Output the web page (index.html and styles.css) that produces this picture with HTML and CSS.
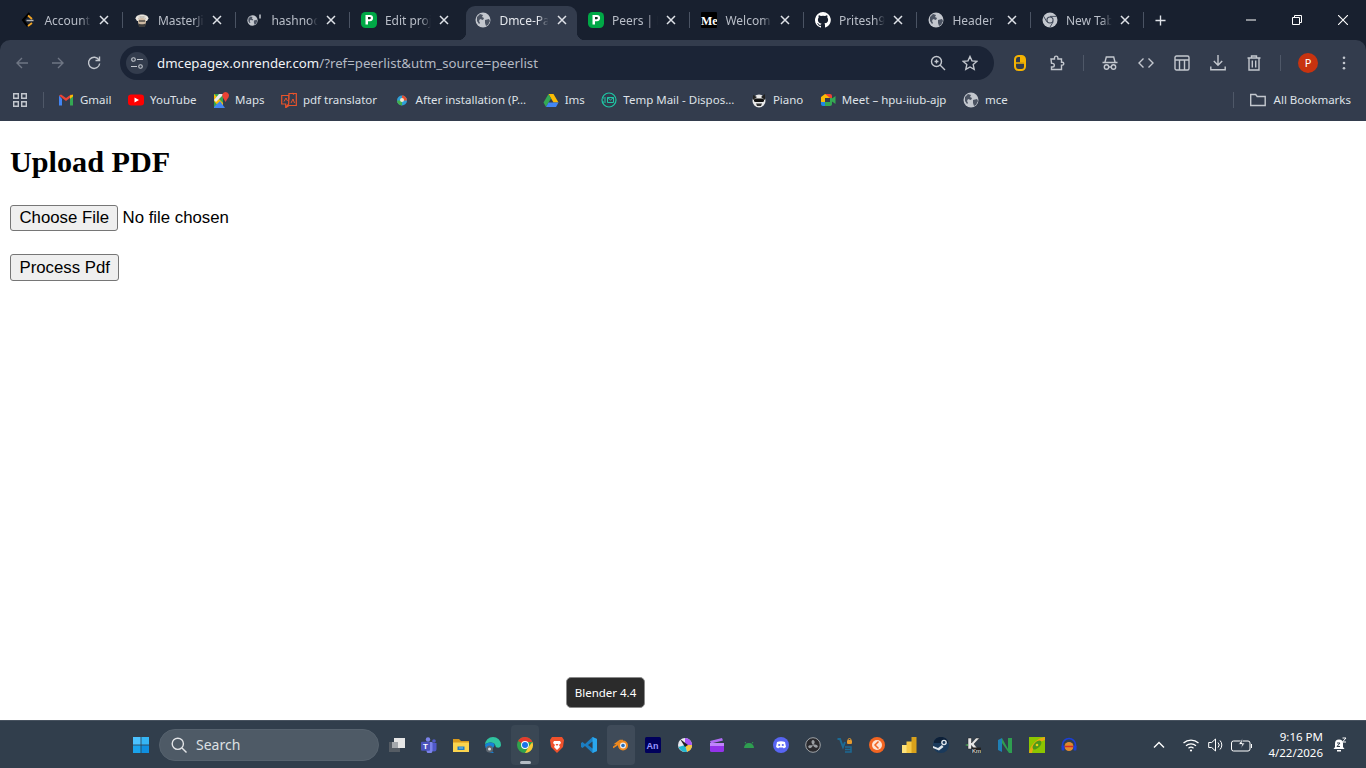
FILE: index.html
```html
<!DOCTYPE html>
<html>
<head>
    <meta charset="utf-8">
    <title>Dmce-Pagex</title>
    <link rel="stylesheet" href="styles.css">
</head>
<body>
<svg class="defs" width="0" height="0">
    <symbol id="globe" viewBox="0 0 16 16">
        <circle cx="8" cy="8" r="7.500" fill="#c3c7ce"/>
        <path d="M2 5l3-3 3 1-1 2 2 1-1 2-3-1-1 2 1 2-1 1-2-3zM10 8l4-1 1 2-2 4-2 1-1-3z" fill="#4b5362"/>
    </symbol>
    <symbol id="peerlist" viewBox="0 0 16 16">
        <rect width="16" height="16" rx="4.500" fill="#00a846"/>
        <path d="M4.500 3h4.500a3.100 3.100 0 0 1 0 6.200H7v3.300H4.500z" fill="#fff"/>
        <path d="M7 5v2.200h1.800a1.100 1.100 0 0 0 0-2.200z" fill="#14301f"/>
    </symbol>
    <symbol id="close" viewBox="0 0 10 10">
        <path d="M1 1l8 8M9 1L1 9" stroke="#dfe2e8" stroke-width="1.500"/>
    </symbol>
</svg>

<header class="chrome">
    <div class="tabstrip">
        <div class="tab">
            <svg class="favicon" viewBox="0 0 16 16"><path d="M9.500 1L3 8l4.500 6" fill="none" stroke="#000" stroke-width="2.200"/><path d="M8 3.500l4 3.500M8 14l4-3" stroke="#f5a623" stroke-width="1.800"/><path d="M6.500 8.500h7" stroke="#b5b5b5" stroke-width="1.500"/></svg>
            <span class="tab-label">Account</span>
            <svg class="tab-close"><use href="#close"/></svg>
        </div>
        <div class="tab">
            <svg class="favicon" viewBox="0 0 16 16"><path d="M1.500 6.500C2 1 14 1 14.500 6.500L13 9H3z" fill="#e9e6df"/><path d="M4 3.500l8 3M12 3.500l-8 3" stroke="#b7b3aa" stroke-width=".8"/><circle cx="8" cy="10" r="4" fill="#cdb9a3"/><path d="M4 11.500c2 1 6 1 8 0l-1 3.500H5z" fill="#3d3d3d"/><path d="M5 9h6" stroke="#333" stroke-width="1.200"/></svg>
            <span class="tab-label">MasterJi</span>
            <svg class="tab-close"><use href="#close"/></svg>
        </div>
        <div class="tab">
            <svg class="favicon" viewBox="0 0 16 16"><use href="#globe" width="11" height="11" y="3"/><path d="M13 2.500v4" stroke="#c3c7ce" stroke-width="1.500"/></svg>
            <span class="tab-label">hashnod</span>
            <svg class="tab-close"><use href="#close"/></svg>
        </div>
        <div class="tab tab-noline">
            <svg class="favicon"><use href="#peerlist"/></svg>
            <span class="tab-label">Edit proj</span>
            <svg class="tab-close"><use href="#close"/></svg>
        </div>
        <div class="tab tab-active">
            <svg class="favicon"><use href="#globe"/></svg>
            <span class="tab-label">Dmce-Pa</span>
            <svg class="tab-close"><use href="#close"/></svg>
        </div>
        <div class="tab">
            <svg class="favicon"><use href="#peerlist"/></svg>
            <span class="tab-label">Peers | D</span>
            <svg class="tab-close"><use href="#close"/></svg>
        </div>
        <div class="tab">
            <svg class="favicon" viewBox="0 0 16 16"><rect width="16" height="16" rx="1" fill="#000"/><text x="0" y="12.500" class="medium-mark">Me</text></svg>
            <span class="tab-label">Welcom</span>
            <svg class="tab-close"><use href="#close"/></svg>
        </div>
        <div class="tab">
            <svg class="favicon" viewBox="0 0 16 16"><path d="M8 0a8 8 0 0 0-2.500 15.600c.4.100.5-.2.500-.4v-1.400c-2.200.5-2.700-1-2.700-1-.4-.9-.9-1.200-.9-1.200-.7-.5.100-.5.100-.5.800.1 1.200.8 1.200.8.700 1.200 1.900.9 2.300.7.100-.5.300-.9.500-1.100-1.800-.2-3.600-.9-3.600-4 0-.9.300-1.600.8-2.100-.1-.2-.4-1 .1-2.100 0 0 .7-.2 2.200.8a7.600 7.600 0 0 1 4 0c1.500-1 2.200-.8 2.200-.8.400 1.100.2 1.900.1 2.100.5.600.8 1.300.8 2.100 0 3.100-1.900 3.700-3.700 3.900.3.300.6.800.6 1.500v2.200c0 .2.100.5.600.4A8 8 0 0 0 8 0z" fill="#fff"/></svg>
            <span class="tab-label">Pritesh9</span>
            <svg class="tab-close"><use href="#close"/></svg>
        </div>
        <div class="tab">
            <svg class="favicon"><use href="#globe"/></svg>
            <span class="tab-label">Header</span>
            <svg class="tab-close"><use href="#close"/></svg>
        </div>
        <div class="tab">
            <svg class="favicon" viewBox="0 0 16 16"><circle cx="8" cy="8" r="7.500" fill="#c3c7ce"/><circle cx="8" cy="8" r="3.600" fill="#3a4354"/><circle cx="8" cy="8" r="2.500" fill="#c3c7ce"/><path d="M8 4.400h6.500M4.800 9.800L1.600 4.200M11.200 9.800L7.800 15.400" stroke="#3a4354" stroke-width=".9"/></svg>
            <span class="tab-label">New Tab</span>
            <svg class="tab-close"><use href="#close"/></svg>
        </div>
        <svg class="newtab" viewBox="0 0 12 12"><path d="M6 .5v11M.5 6h11" stroke="#dfe2e8" stroke-width="1.500"/></svg>
        <div class="winctl">
            <div class="winbtn"><svg viewBox="0 0 10 10"><path d="M0 5h10" stroke="#fff"/></svg></div>
            <div class="winbtn"><svg viewBox="0 0 10 10"><path d="M.5 2.500h7v7h-7zM2.500 2.500v-2h7v7h-2" fill="none" stroke="#fff"/></svg></div>
            <div class="winbtn"><svg viewBox="0 0 10 10"><path d="M0 0l10 10M10 0L0 10" stroke="#fff" stroke-width="1.100"/></svg></div>
        </div>
    </div>

    <div class="toolbar">
        <div class="tool"><svg viewBox="0 0 16 16"><path d="M14 8H3M8 3L3 8l5 5" class="dim"/></svg></div>
        <div class="tool"><svg viewBox="0 0 16 16"><path d="M2 8h11M8 3l5 5-5 5" class="dim"/></svg></div>
        <div class="tool"><svg viewBox="0 0 16 16"><path d="M13 5a5.600 5.600 0 1 0 .7 3.500M13.500 1.500V5.500H9.500" class="line"/></svg></div>
        <div class="urlbar">
            <div class="url-tune"><svg viewBox="0 0 14 14"><circle cx="3.500" cy="3.500" r="1.800" class="thin"/><path d="M7 3.500h6M1 10.500h6" class="thin"/><circle cx="10.500" cy="10.500" r="1.800" class="thin"/></svg></div>
            <div class="url-text"><span class="url-host">dmcepagex.onrender.com</span><span class="url-rest">/?ref=peerlist&amp;utm_source=peerlist</span></div>
            <svg class="url-icon" viewBox="0 0 16 16"><circle cx="6.500" cy="6.500" r="5" class="line"/><path d="M10 10l5 5M4.500 6.500h4M6.500 4.500v4" class="line"/></svg>
            <svg class="url-icon" viewBox="0 0 16 16"><path d="M8 1.500l2 4.400 4.800.5-3.600 3.200 1 4.700L8 12l-4.200 2.300 1-4.700L1.200 6.400 6 5.900z" class="line"/></svg>
        </div>
        <div class="tool tool-ext"><svg viewBox="0 0 16 16"><rect x="3" y="1" width="10" height="14" rx="3.500" fill="none" stroke="#f5b301" stroke-width="2"/><path d="M8 1h2a3 3 0 0 1 3 3v3.500H8z" fill="#f5b301"/><path d="M3 8h10" stroke="#f5b301" stroke-width="1.500"/></svg></div>
        <div class="tool"><svg viewBox="0 0 16 16"><path d="M2 4h3.500V2.800a1.700 1.700 0 0 1 3.400 0V4h3.600v3.300h.9a1.400 1.400 0 0 1 0 2.800h-.9V14.500H2.500V12h1a1.800 1.800 0 0 0 0-3.600h-1z" class="line"/></svg></div>
        <div class="sep"></div>
        <div class="tool"><svg viewBox="0 0 16 16"><path d="M.5 7.500h15M3 7l1.300-5h7.400L13 7" class="line"/><circle cx="4.500" cy="12" r="2.200" class="line"/><circle cx="11.500" cy="12" r="2.200" class="line"/><path d="M6.700 12h2.600" class="line"/></svg></div>
        <div class="tool"><svg viewBox="0 0 16 16"><path d="M5.500 3.500L1 8l4.500 4.500M10.500 3.500L15 8l-4.500 4.500" class="line"/></svg></div>
        <div class="tool"><svg viewBox="0 0 16 16"><rect x="1" y="1" width="14" height="14" rx="1.500" class="line"/><path d="M1 5h14M5.500 5v10M10.500 5v10" class="line"/></svg></div>
        <div class="tool"><svg viewBox="0 0 16 16"><path d="M8 0v10M3.800 6L8 10.200 12.200 6M.8 11.500v3.300h14.400v-3.300" class="line"/></svg></div>
        <div class="tool"><svg viewBox="0 0 16 16"><path d="M1.500 3h13M5.500 3V1h5v2M3 3v12h10V3M6.300 5.500v7M9.700 5.500v7" class="line"/></svg></div>
        <div class="sep sep-wide"></div>
        <div class="tool"><div class="avatar">P</div></div>
        <div class="tool"><svg viewBox="0 0 16 16"><circle cx="8" cy="2.800" r="1.300" fill="#c3c7ce"/><circle cx="8" cy="8" r="1.300" fill="#c3c7ce"/><circle cx="8" cy="13.200" r="1.300" fill="#c3c7ce"/></svg></div>
    </div>

    <nav class="bookmarks">
        <svg class="apps" viewBox="0 0 14 14"><path d="M.7.7h4.600v4.600H.7zM8.700.7h4.600v4.600H8.700zM.7 8.700h4.600v4.600H.7zM8.700 8.700h4.600v4.600H8.700z" class="line"/></svg>
        <div class="sep sep-bm"></div>
        <a class="bm"><svg viewBox="0 0 16 16"><path d="M1 3.500v10h3V7z" fill="#4285f4"/><path d="M12 7v6.500h3v-10z" fill="#34a853"/><path d="M1 3.500L8 9l7-5.500-2-1L8 6 3 2.500z" fill="#ea4335"/><path d="M12 3.500l3-1v2l-3 2.500z" fill="#fbbc04"/></svg>Gmail</a>
        <a class="bm"><svg viewBox="0 0 16 16"><rect y="2.500" width="16" height="11" rx="3" fill="#f00"/><path d="M6.500 5.500v5L11 8z" fill="#fff"/></svg>YouTube</a>
        <a class="bm"><svg viewBox="0 0 16 16"><path d="M1 2h9v14H1z" fill="#34a853"/><path d="M1 2l9 9v5H7L1 9z" fill="#fbbc04"/><path d="M1 15l6-6 5 7H1z" fill="#4285f4"/><path d="M6 2h5l-8 8-2-2z" fill="#e8eaed"/><path d="M12.500 0a3.500 3.500 0 0 1 3 5.200L12.500 10 9.700 5.200A3.500 3.500 0 0 1 12.500 0z" fill="#ea4335"/></svg>Maps</a>
        <a class="bm"><svg viewBox="0 0 16 16"><path d="M.7 3.500h7v8.500l-3 3.300v-3.300H.7zM8 7.500V1.500h7.300V13.500H8l-3 2M11.500 1l1.500 1.500" fill="none" stroke="#e8532b" stroke-width="1.200"/><path d="M3 9.500l2-3.500 1.500 3M10 11l2-4 1.500 4" fill="none" stroke="#e8532b"/></svg>pdf translator</a>
        <a class="bm"><svg viewBox="0 0 16 16"><circle cx="8" cy="8.500" r="5" fill="#2f9fd6"/><path d="M8 3.500a5 5 0 0 1 5 5H8z" fill="#e8502f"/><path d="M3 8.500a5 5 0 0 0 5 5v-5z" fill="#45b04a"/><circle cx="8" cy="8" r="2" fill="#f1e9d2"/></svg>After installation (P...</a>
        <a class="bm"><svg viewBox="0 0 16 16"><path d="M5.500 2h5l5 8.500h-5z" fill="#fbbc04"/><path d="M5.500 2l-5 8.500L3 15l5-8.500z" fill="#34a853"/><path d="M3 15h10l2.500-4.500h-10z" fill="#4285f4"/></svg>Ims</a>
        <a class="bm"><svg viewBox="0 0 16 16"><circle cx="8" cy="8" r="7" fill="none" stroke="#1ec8a5" stroke-width="1.200"/><path d="M2 6h3M3 8h2M2 10h3" stroke="#1ec8a5"/><path d="M6.500 5.500h6v5h-6zM6.500 5.500l3 2.500 3-2.500" fill="none" stroke="#1ec8a5"/></svg>Temp Mail - Dispos...</a>
        <a class="bm"><svg viewBox="0 0 16 16"><circle cx="8" cy="9" r="6.500" fill="#e9e9e9"/><path d="M2 3l4 2-4 3zM14 2l-4 3 4 3z" fill="#222"/><rect x="3" y="6.500" width="10" height="3.500" rx="1.500" fill="#111"/><path d="M5 11.500h6l-1 2.500H6z" fill="#333"/></svg>Piano</a>
        <a class="bm"><svg viewBox="0 0 16 16"><path d="M1 5l4-3h5v4H5v4H1z" fill="#fbbc04"/><path d="M1 10h4v4H3a2 2 0 0 1-2-2z" fill="#1e88e5"/><path d="M5 10h5v4H5z" fill="#34a853"/><path d="M5 2h5a2 2 0 0 1 2 2v2h-2z" fill="#ea4335"/><path d="M10 6h2v6a2 2 0 0 1-2 2z" fill="#34a853"/><path d="M12 6.500l3.500-2.500v8L12 9.500z" fill="#34a853"/></svg>Meet &ndash; hpu-iiub-ajp</a>
        <a class="bm"><svg><use href="#globe"/></svg>mce</a>
        <div class="bm-right">
            <div class="sep sep-bm sep-all"></div>
            <a class="bm bm-all"><svg viewBox="0 0 16 16"><path d="M.7 13.500V2.500h5l1.500 2h8v9z" class="line"/></svg>All Bookmarks</a>
        </div>
    </nav>
</header>

<main class="page">
    <h1>Upload PDF</h1>
    <form class="upload-form">
        <p><input type="file"></p>
        <p><button type="button">Process Pdf</button></p>
    </form>
</main>

<div class="tooltip">Blender 4.4</div>

<footer class="taskbar">
    <svg class="start" viewBox="0 0 16 16"><path d="M0 0h7.600v7.600H0z" fill="#4cc2ff"/><path d="M8.400 0H16v7.600H8.400z" fill="#35b5f5"/><path d="M0 8.400h7.600V16H0z" fill="#1aa3ec"/><path d="M8.400 8.400H16V16H8.400z" fill="#0f8fe0"/></svg>
    <div class="search">
        <svg viewBox="0 0 16 16"><circle cx="6.800" cy="6.800" r="5.600" fill="none" stroke="#e3e5e8" stroke-width="1.400"/><path d="M11 11l4.500 4.500" stroke="#e3e5e8" stroke-width="1.400"/></svg>
        <span>Search</span>
    </div>
    <div class="tray-apps">
        <div class="app"><svg viewBox="0 0 16 16"><rect x="0" y="5" width="11" height="10" fill="#555c64"/><rect x="5" y="1" width="11" height="10" fill="#e6e6e6"/><rect x="3" y="5" width="6" height="6" fill="#a5a9ad"/></svg></div>
        <div class="app"><svg viewBox="0 0 16 16"><circle cx="7" cy="2.500" r="2.200" fill="#7b83eb"/><circle cx="13" cy="4" r="1.800" fill="#5059c9"/><path d="M10 6h5.500v6a2.500 2.500 0 0 1-5 0z" fill="#5059c9"/><path d="M4 5h7.500v8a3 3 0 0 1-6 1z" fill="#7b83eb"/><rect x="0" y="4.800" width="9" height="9" rx="1" fill="#4b53bc"/><text x="2.100" y="12" class="teams-mark">T</text></svg></div>
        <div class="app"><svg viewBox="0 0 16 16"><path d="M0 2h6l2 2h8v3H0z" fill="#d99a1c"/><path d="M0 5.500h16V15H0z" fill="#fbd44e"/><rect x="4.500" y="9.500" width="7" height="3.500" fill="#1f7dc7"/><rect x="6" y="10.500" width="4" height="1" fill="#7fc4ee"/></svg></div>
        <div class="app"><svg viewBox="0 0 16 16"><path d="M0 8a8 8 0 0 1 16 0c0 2-2 3-4 2.500C10 10 11 8 9 6.500 6 4.500 1 6 0 8z" fill="#2fc4a0"/><path d="M0 8c1-2 6-3.500 9-1.500 1 1 .5 3-1 4.500-1.500 2-1 4 1 4.900A8 8 0 0 1 0 8z" fill="#1582d8"/><circle cx="4.500" cy="12" r="3.500" fill="#5d6670"/><circle cx="4.500" cy="12" r="1.500" fill="#ddd"/></svg></div>
        <div class="app app-open">
            <svg viewBox="0 0 16 16"><circle cx="8" cy="8" r="8" fill="#31a24c"/><path d="M8 8L1.100 4A8 8 0 0 1 15.400 5H8z" fill="#e33b2e"/><path d="M15.400 5A8 8 0 0 1 8 16l3.500-6z" fill="#fcc934"/><circle cx="8" cy="8" r="3.900" fill="#fff"/><circle cx="8" cy="8" r="3" fill="#1a73e8"/></svg>
            <div class="app-dot"></div>
        </div>
        <div class="app"><svg viewBox="0 0 16 16"><path d="M3 0h10l2 3-1 7-6 6-6-6-1-7z" fill="#f0512b"/><path d="M5 4h6l1 2-2 2 1 2-3 3-3-3 1-2-2-2z" fill="#fff"/><path d="M6.500 7h3L8 9z" fill="#f0512b"/></svg></div>
        <div class="app"><svg viewBox="0 0 16 16"><path d="M11.500 0L16 2v12l-4.500 2L4 9l-2.500 2L0 10V6l1.500-1L4 7z" fill="#1b7ec2"/><path d="M11.500 0L16 2v12l-4.500 2z" fill="#2aa6ec"/><path d="M11.500 4.500L7 8l4.500 3.500z" fill="#333e4c"/></svg></div>
        <div class="app app-hover"><svg viewBox="0 0 16 16"><path d="M0 10.500L6 6.500H3L7 3.500h3" fill="none" stroke="#f08a1e" stroke-width="1.600"/><circle cx="10" cy="8.500" r="5" fill="#f08a1e"/><circle cx="10" cy="8.500" r="3" fill="#e8eef4"/><circle cx="10" cy="8.500" r="1.800" fill="#2a6fb8"/></svg></div>
        <div class="app"><svg viewBox="0 0 16 16"><rect width="16" height="16" rx="1.500" fill="#00005b"/><text x="1.500" y="11.500" class="an-mark">An</text></svg></div>
        <div class="app"><svg viewBox="0 0 16 16"><circle cx="8" cy="8" r="7" fill="#e8e8f0"/><path d="M8 1a7 7 0 0 1 7 7L8 8z" fill="#a855f7"/><path d="M15 8a7 7 0 0 1-5 6.700L8 8z" fill="#f5c542"/><path d="M10 14.700A7 7 0 0 1 1.500 10L8 8z" fill="#22b8cf"/><path d="M3 2l8 6-3 2z" fill="#222"/></svg></div>
        <div class="app"><svg viewBox="0 0 16 16"><path d="M1 4l12-3 1 2.500L2 6.500z" fill="#b06cf5"/><rect x="1" y="6" width="14" height="9" rx="1.500" fill="#9333ea"/><rect x="1" y="6" width="14" height="3" fill="#c084fc"/></svg></div>
        <div class="app"><svg viewBox="0 0 16 16"><path d="M3 11a5 5 0 0 1 10 0z" fill="#2e9e50"/><path d="M5 6.500L4 5M11 6.500L12 5" stroke="#2e9e50"/></svg></div>
        <div class="app"><svg viewBox="0 0 16 16"><circle cx="8" cy="8" r="8" fill="#5865f2"/><path d="M4 5c2.500-1 5.500-1 8 0l1 5c-1 1-2 1.300-2.500 1.300L10 10.500H6l-.5.800C5 11.300 4 11 3 10z" fill="#fff"/><circle cx="6.200" cy="8" r="1.100" fill="#5865f2"/><circle cx="9.800" cy="8" r="1.100" fill="#5865f2"/></svg></div>
        <div class="app"><svg viewBox="0 0 16 16"><circle cx="8" cy="8" r="7.300" fill="#2a2a2e" stroke="#a0a4a8"/><path d="M8 8C6 6 6 3.500 8 3c2 .5 2.500 3 0 5zM8 8c-2.800.5-4.500-.5-4.800 2 .8 2 3.500 1.500 4.800-2zM8 8c1 2.500 3.500 3.500 4.800 2 .3-2-2.300-3-4.800-2z" fill="#9a9ea3"/></svg></div>
        <div class="app"><svg viewBox="0 0 16 16"><path d="M.5 2h2.500l3 8 2-5" fill="none" stroke="#1c6a94" stroke-width="2"/><path d="M8 10h6v5H8M8 12.500h6" fill="none" stroke="#1c6a94" stroke-width="1.500"/><rect x="10" y="3" width="5" height="4" rx="1" fill="#e59a2e"/><path d="M11 3a1.500 1.500 0 0 1 3 0" fill="none" stroke="#e59a2e"/></svg></div>
        <div class="app"><svg viewBox="0 0 16 16"><circle cx="8" cy="8" r="8" fill="#f26522"/><circle cx="8" cy="8" r="5" fill="#fde3d3"/><path d="M9.500 4.500L6 8l3.500 3.500" fill="none" stroke="#f26522" stroke-width="1.500"/></svg></div>
        <div class="app"><svg viewBox="0 0 16 16"><rect x="1" y="8" width="5" height="8" fill="#fde27a"/><rect x="5.500" y="4.500" width="5.500" height="11.500" fill="#f6c944"/><rect x="10.500" y="0" width="5" height="16" fill="#d9a21b"/></svg></div>
        <div class="app"><svg viewBox="0 0 16 16"><circle cx="8" cy="8" r="8" fill="#1a3a5c"/><path d="M1 4a8 8 0 0 1 14 0v2H1z" fill="#0d2038"/><circle cx="11" cy="5.500" r="2.800" fill="#dfe6ec"/><circle cx="11" cy="5.500" r="1.400" fill="#1a3a5c"/><path d="M0 9l5 2 4-3 1.500 2L6 13.500 0 11z" fill="#dfe6ec"/></svg></div>
        <div class="app"><svg viewBox="0 0 16 16"><path d="M3 1h3.500v5L11 1h3.500L9 7l4 5H9L6.500 8.500V12H3z" fill="#e6e6e6" stroke="#222" stroke-width=".5"/><path d="M0 8l3-1v2z" fill="#4caf50"/><rect x="6.500" y="10.500" width="9.500" height="5.500" fill="#222"/><text x="7" y="15.500" class="km-mark">Km</text></svg></div>
        <div class="app"><svg viewBox="0 0 16 16"><path d="M1 3l4-2v14l-4-2z" fill="#1f7fb5"/><path d="M5 1l6 11V1h4v15h-3L5 6z" fill="#2e9e50"/></svg></div>
        <div class="app"><svg viewBox="0 0 16 16"><rect width="16" height="16" fill="#8cc600"/><path d="M0 16C1 8 8 1 16 0v3C9 5 4 10 3 16z" fill="#e8a911"/><ellipse cx="8" cy="8" rx="5.500" ry="3" transform="rotate(-45 8 8)" fill="#4c9a1a"/><circle cx="8" cy="8" r="1.300" fill="#e8d21a"/></svg></div>
        <div class="app"><svg viewBox="0 0 16 16"><path d="M1.500 10V8a6.500 6.500 0 0 1 13 0v2" fill="none" stroke="#1c3fd6" stroke-width="1.600"/><circle cx="8" cy="9.500" r="4.500" fill="#e08a2e"/><path d="M3.500 9.500h9" stroke="#d12a2a" stroke-width="1.500"/><rect x=".5" y="8.500" width="3" height="5" rx="1" fill="#1c3fd6"/><rect x="12.500" y="8.500" width="3" height="5" rx="1" fill="#1c3fd6"/></svg></div>
    </div>
    <div class="tray">
        <svg class="tray-chev" viewBox="0 0 12 12"><path d="M1 8.500l5-5 5 5" fill="none" stroke="#fff" stroke-width="1.400"/></svg>
        <svg class="tray-wifi" viewBox="0 0 16 14"><path d="M.5 5a11 11 0 0 1 15 0M3 7.800a7.500 7.500 0 0 1 10 0M5.500 10.300a3.800 3.800 0 0 1 5 0" fill="none" stroke="#fff" stroke-width="1.200"/><circle cx="8" cy="12.500" r="1.100" fill="#fff"/></svg>
        <svg class="tray-vol" viewBox="0 0 16 14"><path d="M.7 4.500h3L7.500 1v12L3.700 9.500h-3zM10 4.500a3.500 3.500 0 0 1 0 5M12 2.500a6.500 6.500 0 0 1 0 9" fill="none" stroke="#fff"/></svg>
        <svg class="tray-bat" viewBox="0 0 22 14"><rect x=".5" y="3" width="18.500" height="10" rx="2" fill="none" stroke="#fff"/><path d="M20.500 6v4" stroke="#fff"/><path d="M11.500 0L7.500 6.500h3.500l-1.500 4.500 4.500-6h-3z" fill="#fff" stroke="#313e4c" stroke-width=".8"/></svg>
        <div class="clock"><div>9:16 PM</div><div>4/22/2026</div></div>
        <svg class="tray-bell" viewBox="0 0 16 16"><path d="M8 2.500a4 4 0 0 1 4 4V10l1.500 2h-11L4 10V6.500a4 4 0 0 1 4-4z" fill="#fff"/><rect x="6" y="13" width="4" height="1.500" fill="#fff"/><path d="M6 6h3l-3 3.500h3" fill="none" stroke="#313e4c"/><path d="M11.500 1h3.500l-3.500 4H15" fill="none" stroke="#fff"/></svg>
    </div>
</footer>
</body>
</html>
```

FILE: styles.css
```css
* {
    box-sizing: border-box;
}

html, body {
    height: 100%;
}

body {
    margin: 0;
    display: flex;
    flex-direction: column;
    overflow: hidden;
    background: #fff;
}

.defs {
    position: absolute;
}

/* browser chrome */
.chrome {
    flex: none;
    background: #18202f;
    font-family: "Noto Sans", sans-serif;
    color: #dfe2e8;
}

.tabstrip {
    display: flex;
    align-items: flex-end;
    height: 40px;
    padding-left: 9.4px;
}

.tab {
    position: relative;
    flex: none;
    display: flex;
    align-items: center;
    width: 113.5px;
    height: 34px;
    padding: 0 11px 6px 11px;
    font-size: 12px;
    color: #b9bec8;
}

.tab::after {
    content: "";
    position: absolute;
    right: 0;
    top: 6px;
    height: 16px;
    width: 1px;
    background: #4a5363;
}

.tab-noline::after {
    content: none;
}

.tab-active {
    width: 110.5px;
    margin-left: 3px;
    padding: 0 7px 6px 9px;
    color: #e4e7ec;
    background: #333c4d;
    border-radius: 9px 9px 0 0;
}

.tab-active::before,
.tab-active::after {
    content: "";
    position: absolute;
    top: auto;
    bottom: 0;
    width: 8px;
    height: 8px;
    background: radial-gradient(circle at 0 0, transparent 8px, #333c4d 8.5px);
}

.tab-active::before {
    left: -8px;
}

.tab-active::after {
    right: -8px;
    background: radial-gradient(circle at 100% 0, transparent 8px, #333c4d 8.5px);
}

.favicon {
    flex: none;
    width: 16px;
    height: 16px;
    margin-right: 8px;
}

.tab-label {
    flex: 1;
    min-width: 0;
    overflow: hidden;
    white-space: nowrap;
    -webkit-mask-image: linear-gradient(90deg, #000 70%, transparent 90%);
    mask-image: linear-gradient(90deg, #000 70%, transparent 90%);
}

.tab-close {
    flex: none;
    width: 10px;
    height: 10px;
    margin: 0 3px;
}

.newtab {
    flex: none;
    width: 11px;
    height: 11px;
    margin: 0 0 14.500px 11px;
}

.winctl {
    display: flex;
    margin-left: auto;
    align-self: stretch;
}

.winbtn {
    display: flex;
    align-items: center;
    justify-content: center;
    width: 46px;
}

.winbtn svg {
    width: 10px;
    height: 10px;
}

.toolbar {
    display: flex;
    align-items: center;
    height: 40px;
    padding: 0 0 0 4px;
    background: #333c4d;
    border-radius: 10px 10px 0 0;
}

.tool {
    flex: none;
    display: flex;
    align-items: center;
    justify-content: center;
    width: 36px;
    height: 34px;
    margin-top: 6px;
}

.tool svg {
    width: 16px;
    height: 16px;
}

.tool-ext {
    margin-right: 1px;
}

.line, .dim, .thin {
    fill: none;
    stroke: #c3c7ce;
    stroke-width: 1.400;
}

.dim {
    stroke: #6f7684;
}

.thin {
    stroke-width: 1.100;
}

.urlbar {
    flex: none;
    display: flex;
    align-items: center;
    width: 874px;
    height: 34px;
    margin: 6px 8px 0 8px;
    padding: 0 16px 0 6px;
    background: #1b2436;
    border-radius: 17px;
    font-size: 13.250px;
}

.url-tune {
    display: flex;
    align-items: center;
    justify-content: center;
    width: 22px;
    height: 22px;
    margin-right: 9px;
    border-radius: 50%;
    background: #333c4d;
}

.url-tune svg {
    width: 14px;
    height: 14px;
}

.url-text {
    flex: 1;
    white-space: nowrap;
}

.url-host {
    color: #f0f2f5;
}

.url-rest {
    color: #b4b9c3;
}

.url-icon {
    flex: none;
    width: 16px;
    height: 16px;
    margin-left: 16px;
}

.sep {
    flex: none;
    width: 1px;
    height: 16px;
    margin: 6px 8px 0 8px;
    background: #4f5868;
}

.sep-wide {
    margin: 6px 9px 0 8px;
}

.avatar {
    width: 20px;
    height: 20px;
    border-radius: 50%;
    background: #c8330f;
    color: #fff;
    font-size: 11px;
    line-height: 20px;
    text-align: center;
}

.bookmarks {
    display: flex;
    align-items: center;
    height: 41px;
    padding: 0 15px 2px 12px;
    background: #333c4d;
    font-size: 11.500px;
    color: #dfe2e8;
}

.apps {
    flex: none;
    width: 14px;
    height: 14px;
    margin: 0 4px 0 1px;
}

.sep-bm {
    margin: 0 14px 0 12px;
}

.sep-all {
    margin: 0 16px 0 0;
}

.bm {
    flex: none;
    display: flex;
    align-items: center;
    gap: 6px;
    margin-right: 16.500px;
    white-space: nowrap;
}

.bm svg {
    flex: none;
    width: 16px;
    height: 16px;
}

.bm-right {
    display: flex;
    align-items: center;
    margin-left: auto;
}

.bm-all {
    gap: 8px;
    margin-right: 0;
}

/* the page itself */
.page {
    flex: 1;
    min-height: 0;
    padding: 10px;
    background: #fff;
    color: #000;
    font-family: "Liberation Serif", serif;
}

.page h1 {
    margin: 15px 0 26px;
    font-size: 30.200px;
    line-height: 33px;
}

.upload-form p {
    margin: 0 0 23px;
}

.upload-form input,
.upload-form button {
    font-family: "Liberation Sans", sans-serif;
    font-size: 16.800px;
}

.upload-form input::file-selector-button,
.upload-form button {
    height: 26px;
    padding: 0 8.500px;
    border: 1px solid #767676;
    border-radius: 3px;
    background: #efefef;
    color: #000;
}

.upload-form input::file-selector-button {
    margin-right: 5px;
    padding: 0 7.500px 0 8.500px;
}

.upload-form button {
    height: 27px;
}

.tooltip {
    position: absolute;
    left: 566px;
    top: 677px;
    width: 79px;
    height: 31px;
    border: 1px solid #8a8a8a;
    border-radius: 5px;
    background: #2b2b2b;
    color: #fff;
    font-family: "Noto Sans", sans-serif;
    font-size: 11.500px;
    line-height: 29px;
    text-align: center;
}

/* taskbar */
.taskbar {
    flex: none;
    display: flex;
    align-items: center;
    height: 48px;
    padding-left: 133px;
    background: #313e4c;
    border-top: 1px solid #47525f;
    font-family: "Noto Sans", sans-serif;
    color: #fff;
}

.start {
    flex: none;
    width: 16px;
    height: 16px;
}

.search {
    flex: none;
    display: flex;
    align-items: center;
    width: 220px;
    height: 32px;
    margin-left: 10px;
    padding-left: 11px;
    border-radius: 16px;
    border: 1px solid #56626e;
    background: #4e5a66;
    font-size: 14px;
    color: #dde0e3;
}

.search svg {
    width: 16px;
    height: 16px;
    margin-right: 9px;
}

.tray-apps {
    display: flex;
    margin-left: 2px;
}

.app {
    position: relative;
    flex: none;
    display: flex;
    align-items: center;
    justify-content: center;
    width: 28px;
    height: 40px;
    margin: 0 2px;
    border-radius: 4px;
}

.app svg {
    width: 16px;
    height: 16px;
}

.app-open {
    background: #3a4754;
}

.app-hover {
    background: #3f4b59;
}

.app-dot {
    position: absolute;
    left: 9px;
    bottom: 1px;
    width: 11px;
    height: 3px;
    border-radius: 2px;
    background: #b4bcc4;
}

.tray {
    flex: 1;
    display: flex;
    align-items: center;
    position: relative;
    margin-left: 68px;
}

.tray-chev {
    width: 12px;
    height: 12px;
}

.tray-wifi {
    width: 16px;
    height: 14px;
    margin-left: 18px;
}

.tray-vol {
    width: 16px;
    height: 14px;
    margin-left: 9px;
}

.tray-bat {
    width: 22px;
    height: 14px;
    margin-left: 7px;
}

.clock {
    flex: 1;
    text-align: right;
    font-size: 11.500px;
    line-height: 16px;
}

.tray-bell {
    flex: none;
    width: 16px;
    height: 16px;
    margin: 0 19px 0 8px;
}

/* small marks inside favicons */
.medium-mark {
    font-family: "Liberation Serif", serif;
    font-weight: bold;
    font-size: 12px;
    fill: #fff;
}

.teams-mark {
    font-family: "Liberation Sans", sans-serif;
    font-weight: bold;
    font-size: 8px;
    fill: #fff;
}

.an-mark {
    font-family: "Liberation Sans", sans-serif;
    font-weight: bold;
    font-size: 9px;
    fill: #9999ff;
}

.km-mark {
    font-family: "Liberation Sans", sans-serif;
    font-size: 6px;
    fill: #fff;
}
```
